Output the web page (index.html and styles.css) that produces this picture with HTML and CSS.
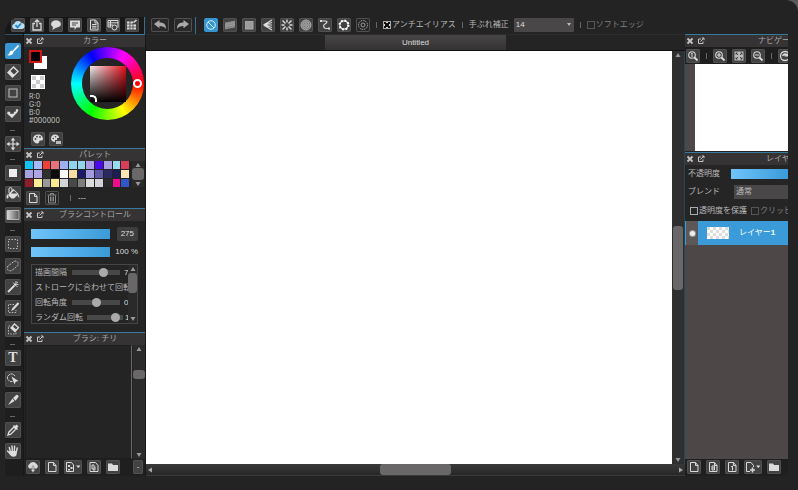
FILE: index.html
```html
<!DOCTYPE html>
<html lang="ja">
<head>
<meta charset="utf-8">
<title>Untitled</title>
<link rel="stylesheet" href="styles.css">
</head>
<body>
<svg class="sprite" aria-hidden="true">
  <symbol id="close" viewBox="0 0 8 8"><path d="M1.500 1.500l5 5M6.500 1.500l-5 5" stroke="currentColor" stroke-width="1.800"/></symbol>
  <symbol id="pop" viewBox="0 0 8 8"><path d="M4 2H1.500v4.500H6V4.500M3.500 4.500L7 1M4.800 1H7v2.200" fill="none" stroke="currentColor"/></symbol>
  <symbol id="up" viewBox="0 0 8 8"><path d="M4 2l2.500 4h-5z" fill="currentColor"/></symbol>
  <symbol id="down" viewBox="0 0 8 8"><path d="M4 6L1.500 2h5z" fill="currentColor"/></symbol>
  <symbol id="left" viewBox="0 0 8 8"><path d="M2 4l4-2.500v5z" fill="currentColor"/></symbol>
  <symbol id="right" viewBox="0 0 8 8"><path d="M6 4L2 1.500v5z" fill="currentColor"/></symbol>
  <symbol id="page" viewBox="0 0 14 14"><path d="M3.500 2.500h5l2.500 3v6H3.500zM8.500 2.500v3H11" fill="none" stroke="currentColor"/></symbol>
  <symbol id="folder" viewBox="0 0 14 14"><path d="M2 3.500h4l1 1.500h5v6H2z" fill="currentColor"/></symbol>
  <symbol id="lens" viewBox="0 0 14 14"><circle cx="6" cy="6" r="3.300" fill="none" stroke="currentColor" stroke-width="1.100"/><path d="M8.500 8.500l3 3" stroke="currentColor" stroke-width="1.800"/></symbol>
</svg>

<div class="app">
  <header class="topbar">
    <div class="menu">
      <button class="ib" aria-label="クラウド"><svg viewBox="0 0 14 14"><path d="M3.500 11a2.700 2.700 0 0 1-.3-5.300A4 4 0 0 1 10.500 5a3 3 0 0 1 0 6z" fill="#b9def5"/><path d="M4.500 7.200l2 2.200L10 5.500" fill="none" stroke="#2787c4" stroke-width="1.800"/></svg></button>
      <button class="ib" aria-label="共有"><svg viewBox="0 0 14 14"><path d="M5 5.500H3V12h8V5.500H9M7 9V2M4.800 4L7 1.800 9.200 4" fill="none" stroke="currentColor" stroke-width="1.300"/></svg></button>
      <button class="ib" aria-label="コメント"><svg viewBox="0 0 14 14"><ellipse cx="7" cy="6" rx="5" ry="3.700" fill="currentColor"/><path d="M4 8l-.5 4L8 9z" fill="currentColor"/></svg></button>
      <button class="ib" aria-label="メッセージ"><svg viewBox="0 0 14 14"><path d="M2 2.500h10v7H8.500l-2 2.500V9.500H2z" fill="currentColor"/><path d="M4 5h6M4 7h4" stroke="#444"/></svg></button>
      <button class="ib" aria-label="書類"><svg viewBox="0 0 14 14"><path d="M3.500 2h5l2.500 3v7H3.500zM8 2v3h3M5 6.500h4.500M5 8.300h4.500M5 10h4.500" fill="none" stroke="currentColor"/></svg></button>
      <button class="ib" aria-label="設定一覧"><svg viewBox="0 0 14 14"><path d="M2 2.500h10v7M2 2.500V9h3M2 4.800h10M2 7h5M4.500 2.500V9" fill="none" stroke="currentColor"/><circle cx="8.500" cy="9.500" r="2.500" fill="none" stroke="currentColor"/></svg></button>
      <button class="ib" aria-label="表を編集"><svg viewBox="0 0 14 14"><path d="M2 3.500h6v2.500h3v5.500H2z" fill="currentColor"/><path d="M5 3v9M8 5v7M2 6h9M2 9h9" stroke="#444" stroke-width=".8"/><path d="M8.500 4.500l3-2.500" stroke="currentColor" stroke-width="1.600"/></svg></button>
    </div>
    <div class="history">
      <button class="ib wide" aria-label="元に戻す"><svg viewBox="0 0 18 14"><path d="M3 6L8.500 2v2.500c4.500 0 6.500 2 6.500 6.500C13.500 8.800 11.500 8 8.500 8v2.200z" fill="#aaa"/></svg></button>
      <button class="ib wide" aria-label="やり直す"><svg viewBox="0 0 18 14"><path d="M15 6L9.500 2v2.500C5 4.500 3 6.500 3 11c1.500-2.200 3.500-3 6.500-3v2.200z" fill="#aaa"/></svg></button>
    </div>
    <div class="snaps">
      <button class="ib on" aria-label="スナップオフ"><svg viewBox="0 0 14 14"><circle cx="7" cy="7" r="4.300" fill="none" stroke="#d5efff"/><path d="M4 4l6 6" stroke="#d5efff"/></svg></button>
      <button class="ib" aria-label="平行スナップ"><svg viewBox="0 0 14 14"><path d="M2 4.500l10-2v7l-10 2z" fill="#888"/><path d="M2 6.500l10-2M2 8.500l10-2" stroke="#aaa" stroke-width=".6"/></svg></button>
      <button class="ib" aria-label="十字スナップ"><svg viewBox="0 0 14 14"><path d="M3 3h8.500v8.500H3z" fill="#aaa"/><path d="M3 5h8.500M3 7h8.500M3 9h8.500M5 3v8.500M7 3v8.500M9 3v8.500" stroke="#909090" stroke-width=".6"/></svg></button>
      <button class="ib" aria-label="消失点スナップ"><svg viewBox="0 0 14 14"><path d="M2.500 7L11 2M2.500 7L11 4.500M2.500 7H11M2.500 7L11 9.500M2.500 7L11 12" stroke="currentColor" stroke-width="1.200"/></svg></button>
      <button class="ib" aria-label="集中線スナップ"><svg viewBox="0 0 14 14"><path d="M7 1.500v3M7 9.500v3M1.500 7h3M9.500 7h3M2.500 2.500l3 3M8.500 8.500l3 3M11.500 2.500l-3 3M5.500 8.500l-3 3" stroke="currentColor" stroke-width="1.400"/></svg></button>
      <button class="ib" aria-label="同心円スナップ"><svg viewBox="0 0 14 14"><circle cx="7" cy="7" r="5.300" fill="#777"/><g fill="none" stroke="#b5b5b5" stroke-width=".8"><circle cx="7" cy="7" r="5"/><circle cx="7" cy="7" r="3.200"/><circle cx="7" cy="7" r="1.300"/></g></svg></button>
      <button class="ib" aria-label="曲線スナップ"><svg viewBox="0 0 14 14"><path d="M3 3h4c3 0 2 2 0 3s-2 4 1 4.500h3" fill="none" stroke="currentColor" stroke-width="1.200"/><path d="M2 2h2v2H2zM10 9.500h2v2h-2z" fill="currentColor"/></svg></button>
      <button class="ib" aria-label="楕円スナップ"><svg viewBox="0 0 14 14"><circle cx="7" cy="7" r="4.200" fill="none" stroke="currentColor" stroke-width="1.200"/><circle cx="7" cy="7" r="4.400" fill="none" stroke="#fff" stroke-width="2.200" stroke-dasharray="1.700 1.750"/></svg></button>
      <button class="ib ghost" aria-label="スナップ設定"><svg viewBox="0 0 14 14"><circle cx="7" cy="7" r="4.500" fill="none" stroke="#aaa" stroke-dasharray="1.500 .8"/><circle cx="7" cy="7" r="2" fill="none" stroke="#999"/></svg></button>
    </div>
    <div class="options">
      <i class="sep"></i>
      <label class="check"><input type="checkbox" checked>アンチエイリアス</label>
      <i class="sep"></i>
      <label class="stab">手ぶれ補正 <span class="selwrap"><select><option>14</option></select></span></label>
      <i class="sep"></i>
      <label class="check dim"><input type="checkbox">ソフトエッジ</label>
    </div>
  </header>

  <div class="work">
    <nav class="tools">
      <button class="on" aria-label="ブラシ"><svg viewBox="0 0 16 16"><path d="M13.500 2.500L7.500 9" stroke="#fff" stroke-width="1.800"/><path d="M7.500 8c1.500 1 1 3-1 4-1.500.7-3 .6-4.500 0 2-.5 2-1.500 2.700-2.800S6.500 7.500 7.500 8z" fill="#fff"/></svg></button>
      <button aria-label="消しゴム"><svg viewBox="0 0 16 16"><path d="M3 8.500L8.500 3 13 7.500 7.500 13z" fill="none" stroke="currentColor" stroke-width="1.400"/><path d="M3 8.500L5 6.500l4.500 4.500-2 2z" fill="currentColor"/></svg></button>
      <button aria-label="図形"><svg viewBox="0 0 16 16"><path d="M4 4h8v8H4z" fill="none" stroke="#bbb" stroke-width="1.100"/></svg></button>
      <button aria-label="ドット"><svg viewBox="0 0 16 16"><path d="M2.500 6.500h2v2h2v2h1v-2h2v-2h2V4H13" fill="none" stroke="currentColor" stroke-width="1.300"/><path d="M2.500 7l4.500 4 6-7" fill="none" stroke="currentColor" stroke-width="1.500"/></svg></button>
      <hr>
      <button aria-label="移動"><svg viewBox="0 0 16 16"><path d="M8 3v10M3 8h10" stroke="currentColor" stroke-width="1.200"/><path d="M8 1.500L10.300 4.500H5.700zM8 14.500l-2.300-3h4.600zM1.500 8l3-2.300v4.600zM14.500 8l-3 2.300V5.700z" fill="currentColor"/></svg></button>
      <hr>
      <button aria-label="塗りつぶし図形"><svg viewBox="0 0 16 16"><path d="M4 4h8v8H4z" fill="#eee"/></svg></button>
      <button aria-label="バケツ"><svg viewBox="0 0 16 16"><path d="M4 7.500L8.500 3l5 5L9 12.500H6.500L3 9z" fill="currentColor"/><path d="M7 6V3a1.500 1.500 0 0 0-3 0v4" fill="none" stroke="currentColor"/><path d="M2.500 8C1 10.500 1.200 12.500 2.500 12.500S4 10.500 2.500 8zM13.500 8l1 4-2-2z" fill="currentColor"/><path d="M6 7.500l3-3 3 3z" fill="#444"/></svg></button>
      <button aria-label="グラデーション"><svg viewBox="0 0 16 16"><defs><linearGradient id="gr"><stop stop-color="#ddd"/><stop offset="1" stop-color="#555"/></linearGradient></defs><path d="M2 3.500h12v9H2z" fill="url(#gr)" stroke="#ccc" stroke-width=".8"/></svg></button>
      <hr>
      <button aria-label="選択"><svg viewBox="0 0 16 16"><path d="M3.500 3.500h9v9h-9z" fill="none" stroke="#bbb" stroke-dasharray="1.500 1.500"/></svg></button>
      <button aria-label="投げなわ"><svg viewBox="0 0 16 16"><path d="M2.500 9C3 7 5.500 6.500 7 5s3.500-2.500 5-1.500S13.500 7 12 8.500 9.500 10 8 11.500s-3 1.500-4.500.8S2 10 2.500 9z" fill="none" stroke="#ccc" stroke-dasharray="1.800 1.200"/></svg></button>
      <button aria-label="自動選択"><svg viewBox="0 0 16 16"><path d="M3 13l6.500-6.500" stroke="currentColor" stroke-width="1.800"/><path d="M11 2v2M13.500 5.500h-2M8 3.500l1 1.200M13 3l-1.500 1.500M12.500 8L11 6.500" stroke="currentColor" stroke-width=".9"/><circle cx="10.300" cy="5.500" r="1.300" fill="currentColor"/></svg></button>
      <button aria-label="選択ペン"><svg viewBox="0 0 16 16"><path d="M9 4.500H3.500v8H11V10" fill="none" stroke="#bbb" stroke-dasharray="1.500 1.300"/><path d="M13.500 3L8 9" stroke="currentColor" stroke-width="2"/><path d="M7.500 8l1.500 1.500L6 11z" fill="currentColor"/></svg></button>
      <button aria-label="選択消し"><svg viewBox="0 0 16 16"><path d="M5 5H3.500v8H11v-2" fill="none" stroke="#bbb" stroke-dasharray="1.500 1.300"/><path d="M6 7L9.500 3l4 3.500-3.500 4z" fill="none" stroke="currentColor" stroke-width="1.300"/><path d="M6 7l1.500-1.700 4 3.500L10 10.500z" fill="currentColor"/></svg></button>
      <hr>
      <button class="type" aria-label="テキスト">T</button>
      <button aria-label="操作"><svg viewBox="0 0 16 16"><path d="M7.500 10.500H5L2.500 8V5.500L5 3h3l2.500 2.500" fill="none" stroke="#ccc" stroke-dasharray="2.500 .6"/><path d="M6.500 5.500l7 4.500-2.800.7L9.500 13.500z" fill="currentColor"/></svg></button>
      <button aria-label="分割"><svg viewBox="0 0 16 16"><path d="M3 13L7.500 6.500 9.500 9z" fill="currentColor"/><path d="M8 6l3.500-3.300c1.500 0 2.300 1 2 2.300L10.500 8.700z" fill="currentColor"/></svg></button>
      <hr>
      <button aria-label="スポイト"><svg viewBox="0 0 16 16"><path d="M3 13l.8-2.800L9 5l2 2-5.200 5.200z" fill="none" stroke="currentColor" stroke-width="1.300"/><path d="M8 4l1-1 1 1 1.500-1.500 2 2L12 6l1 1-1 1z" fill="currentColor"/></svg></button>
      <button aria-label="手のひら"><svg viewBox="0 0 16 16"><path d="M5.300 8.500L4.300 4.500M7.300 8L7 3M9.300 8l.3-4.800M11.300 9l.9-4M2.500 8l3 3" stroke="currentColor" stroke-width="1.400" stroke-linecap="round"/><path d="M4.500 8h7.500l-.3 3c-.3 1.700-1 2.800-3.200 2.800s-3-1-4.500-3.800z" fill="currentColor"/></svg></button>
    </nav>

    <aside class="left">
      <section class="panel">
        <div class="head"><button aria-label="閉じる"><svg><use href="#close"/></svg></button><button aria-label="切り離す"><svg><use href="#pop"/></svg></button><h2>カラー</h2></div>
        <div class="color">
          <div class="info">
            <div class="fgbg"><i class="bg"></i><i class="fg"></i></div>
            <i class="clear"></i>
            <p>R:0<br>G:0<br>B:0<br>#000000</p>
            <div class="pair">
              <button class="ib" aria-label="パレット"><svg viewBox="0 0 14 14"><path d="M7 2.500c3 0 5 2 5 4.500 0 2-2 1.500-3 1.500s-.5 3-2.500 3S2 9.500 2 7s2-4.500 5-4.500z" fill="currentColor"/><g fill="#444"><circle cx="4.500" cy="7" r=".9"/><circle cx="6" cy="4.700" r=".9"/><circle cx="9" cy="5" r=".9"/></g></svg></button>
              <button class="ib" aria-label="パレットに追加"><svg viewBox="0 0 14 14"><path d="M6 2.500c2.500 0 4 1.500 4 3.500H8v2H6v2C3.500 10 2 8.500 2 6.500s1.500-4 4-4z" fill="currentColor"/><g fill="#444"><circle cx="4.300" cy="6.500" r=".8"/><circle cx="6.500" cy="4.700" r=".8"/></g><path d="M7 9h5v3H7z" fill="#bbb"/></svg></button>
            </div>
          </div>
          <div class="wheel"><div class="hole"><div class="sv"></div></div><i class="hue"></i></div>
        </div>
      </section>

      <section class="panel">
        <div class="head"><button aria-label="閉じる"><svg><use href="#close"/></svg></button><button aria-label="切り離す"><svg><use href="#pop"/></svg></button><h2>パレット</h2></div>
        <div class="palette">
          <div class="swatches">
            <i style="background:#14c3f5"></i><i style="background:#a9b8f2"></i><i style="background:#ee4038"></i><i style="background:#e5737b"></i><i style="background:#9fb0f0"></i><i style="background:#8fd4ea"></i><i style="background:#91d5e8"></i><i style="background:#a99ce6"></i><i style="background:#4a08ee"></i><i style="background:#a9a0e0"></i><i style="background:#98dcf2"></i><i style="background:#d83e55"></i>
            <i style="background:#a69fe2"></i><i style="background:#ada5e6"></i><i style="background:#303030"></i><i style="background:#0c0c0c"></i><i style="background:#ffffff"></i><i style="background:#f7dca4"></i><i style="background:#1a1b68"></i><i style="background:#a39be0"></i><i style="background:#5e57a8"></i><i style="background:#2b2960"></i><i style="background:#1c1d55"></i><i style="background:#fde7b4"></i>
            <i style="background:#8c1e2b"></i><i style="background:#f9ee98"></i><i style="background:#999999"></i><i style="background:#f6ea92"></i><i style="background:#d4d4d8"></i><i style="background:#484848"></i><i style="background:#7e7e7e"></i><i style="background:#dcdcdc"></i><i style="background:#d2d2d8"></i><i style="background:#2a2a2a"></i><i style="background:#f00c8a"></i><i style="background:#2f57c8"></i>
          </div>
          <div class="vbar pal"><svg><use href="#up"/></svg><i class="thumb"></i><svg><use href="#down"/></svg></div>
        </div>
        <div class="palbar">
          <button class="ib" aria-label="色を追加"><svg><use href="#page"/></svg></button>
          <button class="ib ghost" aria-label="色を削除"><svg viewBox="0 0 14 14"><path d="M2.500 4h9M5.500 4V2.500h3V4M3.500 4.500V12h7V4.500M5.500 5.500v5M7 5.500v5M8.500 5.500v5" fill="none" stroke="#999" stroke-width=".9"/></svg></button>
          <i class="sep"></i><span>---</span>
        </div>
      </section>

      <section class="panel">
        <div class="head"><button aria-label="閉じる"><svg><use href="#close"/></svg></button><button aria-label="切り離す"><svg><use href="#pop"/></svg></button><h2>ブラシコントロール</h2></div>
        <div class="control">
          <div class="size"><input class="bar" type="range" aria-label="ブラシサイズ" max="275" value="275"><output class="box">275</output></div>
          <div class="size"><input class="bar" type="range" aria-label="不透明度" value="100"><output>100 %</output></div>
          <div class="params">
            <div class="rows">
              <label>描画間隔<input type="range" value="70"><span>7</span></label>
              <label>ストロークに合わせて回転</label>
              <label>回転角度<input type="range" value="50"><span>0</span></label>
              <label>ランダム回転<input class="short" type="range" value="90"><span>1</span></label>
            </div>
            <div class="vbar par"><svg><use href="#up"/></svg><i class="thumb"></i><i></i><svg><use href="#down"/></svg></div>
          </div>
        </div>
      </section>

      <section class="panel grow">
        <div class="head"><button aria-label="閉じる"><svg><use href="#close"/></svg></button><button aria-label="切り離す"><svg><use href="#pop"/></svg></button><h2>ブラシ: チリ</h2></div>
        <div class="brushes">
          <div class="blist"></div>
          <div class="vbar bru"><svg><use href="#up"/></svg><i></i><i class="thumb"></i><i></i><svg><use href="#down"/></svg></div>
        </div>
        <div class="foot">
          <button class="ib" aria-label="クラウドから追加"><svg viewBox="0 0 14 14"><path d="M3.500 8.500a2.500 2.500 0 0 1 0-4.500 4 4 0 0 1 7 0 2.500 2.500 0 0 1 0 4.500z" fill="currentColor"/><path d="M7 12.500L4.500 9.500h1.700V6h1.600v3.500h1.700z" fill="currentColor" stroke="#444" stroke-width=".4"/></svg></button>
          <button class="ib" aria-label="新規ブラシ"><svg><use href="#page"/></svg></button>
          <button class="ib wide" aria-label="ビットマップから追加"><svg viewBox="0 0 18 14"><path d="M2.500 2.500h5l2 2.500v6.500h-7z" fill="none" stroke="currentColor"/><path d="M4 5h2v2H4zM6.500 7h2v2h-2zM4 9h2v1.500H4z" fill="currentColor"/><path d="M12 5.500h4.500L14.300 8z" fill="currentColor"/></svg></button>
          <button class="ib" aria-label="複製"><svg viewBox="0 0 14 14"><path d="M3 2.500h5.500l2.500 3v6H3zM5 5h2v4H5zM8 6.500v3.500H6" fill="none" stroke="currentColor"/></svg></button>
          <button class="ib" aria-label="フォルダ"><svg><use href="#folder"/></svg></button>
          <button class="ib more" aria-label="その他">-</button>
        </div>
      </section>
    </aside>

    <main class="center">
      <div class="tabs"><button class="tab">Untitled</button></div>
      <div class="stage">
        <div class="canvas"></div>
        <div class="vbar big"><svg><use href="#up"/></svg><i></i><i class="thumb"></i><i></i><svg><use href="#down"/></svg></div>
      </div>
      <div class="hbar"><svg><use href="#left"/></svg><i></i><i class="thumb"></i><i></i><svg><use href="#right"/></svg></div>
    </main>

    <aside class="rightside">
      <section class="panel">
        <div class="head"><button aria-label="閉じる"><svg><use href="#close"/></svg></button><button aria-label="切り離す"><svg><use href="#pop"/></svg></button><h2>ナビゲーター</h2></div>
        <div class="zoombar">
          <button class="ib" aria-label="等倍"><svg viewBox="0 0 14 14"><use href="#lens"/><path d="M6 4v4M5 5l1-1" stroke="currentColor"/></svg></button><i class="sep"></i>
          <button class="ib" aria-label="拡大"><svg viewBox="0 0 14 14"><use href="#lens"/><path d="M4 6h4M6 4v4" stroke="currentColor" stroke-width="1.200"/></svg></button>
          <button class="ib" aria-label="全体表示"><svg viewBox="0 0 14 14"><path d="M2.500 2.500h9v9h-9z" fill="#bbb"/><path d="M4 4l2 2M10 4L8 6M4 10l2-2M10 10L8 8M4 4h1.500M4 4v1.500M10 4H8.500M10 4v1.500M4 10h1.500M4 10V8.500M10 10H8.500M10 10V8.500" stroke="#333" stroke-width=".9"/></svg></button>
          <button class="ib" aria-label="縮小"><svg viewBox="0 0 14 14"><use href="#lens"/><path d="M4 6h4" stroke="currentColor" stroke-width="1.200"/></svg></button><i class="sep"></i>
          <button class="ib" aria-label="回転"><svg viewBox="0 0 14 14"><circle cx="7" cy="7" r="4.500" fill="none" stroke="currentColor" stroke-width="1.300"/><path d="M4 7a3 3 0 0 1 5-2l1-1v3.500H6.500l1-1z" fill="currentColor"/></svg></button>
        </div>
        <div class="navi"><div class="thumbnail"></div></div>
      </section>
      <section class="panel grow">
        <div class="head"><button aria-label="閉じる"><svg><use href="#close"/></svg></button><button aria-label="切り離す"><svg><use href="#pop"/></svg></button><h2 class="wide">レイヤー</h2></div>
        <div class="props">
          <label class="prop">不透明度<input class="bar" type="range" value="100"></label>
          <label class="prop">ブレンド<select><option>通常</option></select></label>
          <div class="checks"><label class="check"><input type="checkbox">透明度を保護</label><label class="check dim"><input type="checkbox">クリッピング</label></div>
        </div>
        <div class="layers">
          <div class="layer"><button class="eye" aria-label="表示"></button><i class="mini"></i><span>レイヤー<b>1</b></span></div>
        </div>
        <div class="foot">
          <button class="ib" aria-label="新規レイヤー"><svg><use href="#page"/></svg></button>
          <button class="ib" aria-label="8bitレイヤー"><svg viewBox="0 0 14 14"><use href="#page"/><path d="M6 6h2.500v4H6zM6 8h2.500" fill="none" stroke="currentColor"/></svg></button>
          <button class="ib" aria-label="1bitレイヤー"><svg viewBox="0 0 14 14"><use href="#page"/><path d="M7.500 6v4.500M6 7l1.500-1" stroke="currentColor"/></svg></button>
          <button class="ib wide" aria-label="レイヤーを追加"><svg viewBox="0 0 18 14"><path d="M6 11.500H2.500v-9h4.500l2.500 3V7" fill="none" stroke="currentColor"/><path d="M8.500 7.500v5M6 10h5" stroke="currentColor" stroke-width="1.500"/><path d="M12 5.500h4.500L14.300 8z" fill="currentColor"/></svg></button>
          <button class="ib" aria-label="フォルダ"><svg><use href="#folder"/></svg></button>
        </div>
      </section>
    </aside>
  </div>
</div>
</body>
</html>
```
FILE: styles.css
```css
* { box-sizing: border-box; }
html { background: #5a5a5a; }
body {
  margin: 0;
  height: 100vh;
  min-height: 480px;
  padding: 17px 10px 14px 5px;
  background: #232323;
  border-top-right-radius: 12px;
  color: #b8b8b8;
  font: 8px/12px "Liberation Sans", "Noto Sans CJK JP", sans-serif;
  overflow: hidden;
}
.sprite { position: absolute; width: 0; height: 0; }
svg { display: block; }
i { display: block; }
button, select, input { font: inherit; color: inherit; margin: 0; padding: 0; border: 0; }
h2, p { margin: 0; font: inherit; }

.app {
  display: flex;
  flex-direction: column;
  height: 100%;
  border-top-left-radius: 16px;
  overflow: hidden;
}

/* icon buttons */
.ib {
  display: grid;
  place-items: center;
  flex: none;
  width: 14px;
  height: 14px;
  border-radius: 2px;
  background: #434243;
  box-shadow: 0 0 0 1px #505050 inset;
  color: #dadada;
}
.ib svg { width: 14px; height: 14px; }
.ib.wide { width: 18px; }
.ib.wide svg { width: 18px; }
.ib.on { background: #3796d2; box-shadow: none; }
.ib.ghost { background: #252525; }
.sep { flex: none; width: 1px; height: 6px; background: #666; }

/* top bar */
.topbar { display: flex; flex: none; height: 17px; }
.menu, .history, .snaps, .options { display: flex; align-items: center; padding-bottom: 1px; }
.menu { gap: 5px; width: 140px; padding-left: 6px; border-right: 1px solid #34708f; background: #181818; }
.history { gap: 5px; padding-left: 6px; padding-right: 3px; border-right: 1px solid #34708f; }
.history .ib { background: #292929; }
.snaps { gap: 5px; padding-left: 8px; padding-right: 6px; }
.options { gap: 6px; white-space: nowrap; }
.check { display: flex; align-items: center; gap: 1px; color: #b8b8b8; }
.check input { appearance: none; width: 8px; height: 8px; border: 1px solid #aaa; }
.check input:checked {
  background:
    linear-gradient(45deg, transparent 40%, #111 40% 60%, transparent 60%),
    linear-gradient(-45deg, #ddd 40%, #111 40% 60%, #ddd 60%);
}
.check.dim { color: #808080; }
.dim input { border-color: #555; }
.stab { display: flex; align-items: center; gap: 5px; }
.selwrap { position: relative; }
.selwrap::after {
  content: "";
  position: absolute;
  right: 3px;
  top: 5px;
  border: 2px solid transparent;
  border-top: 3px solid #bbb;
}
select { appearance: none; background: #4a4748; }
.selwrap select { display: block; width: 60px; height: 14px; padding-left: 2px; color: #ddd; border-radius: 1px; }

.work { display: flex; flex: 1; min-height: 0; }

/* tool column */
.tools {
  display: flex;
  flex-direction: column;
  justify-content: space-between;
  flex: none;
  width: 18px;
  padding: 8px 0 17px;
  background: #1e1e1e;
  border-top: 1px solid #2b5468;
}
.tools button { width: 16px; height: 16px; background: #434243; border-radius: 2px; box-shadow: 0 0 0 1px #505050 inset; color: #dedede; }
.tools .on { background: #3796d2; box-shadow: none; }
.tools .type { font: bold 14px/16px "Liberation Serif", serif; }
.tools hr { width: 5px; height: 3px; margin: 0 5px; border: 0; border-bottom: 1px solid #666; }

/* panels */
.left { display: flex; flex-direction: column; flex: none; width: 123px; padding: 0 1px; background: #181818; }
.rightside { display: flex; flex-direction: column; flex: none; width: 103px; overflow: hidden; }
.panel { flex: none; background: #242424; }
.panel.grow { display: flex; flex-direction: column; flex: 1; min-height: 0; }
.head { display: flex; align-items: center; gap: 3px; height: 13px; padding-left: 1px; background: #363334; border-top: 1px solid #377a9c; }
.head button { background: none; width: 8px; height: 8px; color: #c4c4c4; }
.head svg { width: 8px; height: 8px; }
.head h2 { flex: 1; padding-right: 2px; text-align: center; white-space: nowrap; color: #a8a8a8; }

.color { display: flex; justify-content: space-between; height: 101px; padding: 0 1px 0 5px; }
.info { width: 42px; display: flex; flex-direction: column; color: #c4c4c4; font: 7px/8px Inter, "Liberation Sans", sans-serif; }
.fgbg { position: relative; height: 20px; margin-top: 3px; }
.fg, .bg { position: absolute; width: 13px; height: 13px; }
.fg { left: 0; top: 0; background: #000; border: 2px solid #cf1515; }
.bg { left: 5px; top: 6px; background: #fff; }
.clear { width: 14px; height: 14px; margin: 5px 0 4px 2px; border: 1px solid #fff; background: repeating-conic-gradient(#fff 0 25%, #ccc 0 50%) 0 0 / 8px 8px; }
.pair { display: flex; gap: 4px; margin-top: 7px; padding-left: 2px; }
.wheel {
  position: relative;
  display: grid;
  place-items: center;
  width: 73px;
  height: 73px;
  border-radius: 50%;
  background: conic-gradient(from 90deg, #f00, #ff0, #0f0, #0ff, #00f, #f0f, #f00);
}
.hole { display: grid; place-items: center; width: 51px; height: 51px; border-radius: 50%; background: #242424; }
.sv { position: relative; width: 36px; height: 36px; background: linear-gradient(to top, #000, transparent), linear-gradient(to right, #eee, #e8101c); }
.sv::after { content: ""; position: absolute; left: 0; bottom: 0; width: 5px; height: 5px; border: solid #fff; border-width: 2px 2px 0 0; border-radius: 0 5px 0 0; }
.hue { position: absolute; right: 2px; top: 32px; width: 9px; height: 9px; border: 2px solid #fff; border-radius: 50%; }

/* scroll bars */
.vbar { display: grid; justify-items: center; color: #999; background: #2b2a2a; }
.vbar svg, .hbar svg { width: 8px; height: 8px; }
.thumb { width: 100%; height: 100%; background: #696767; border-radius: 3px; }

.palette { display: flex; gap: 3px; padding: 0 1px 1px; }
.swatches { flex: 1; display: grid; grid-template-columns: repeat(12, 1fr); grid-auto-rows: 8px; gap: 1px; }
.pal { width: 12px; grid-template-rows: 7px 12px 7px; }
.palbar { display: flex; align-items: center; gap: 5px; height: 20px; padding-left: 2px; }
.palbar .sep { margin: 0 2px 0 6px; }
.palbar span { color: #ddd; }

.control { height: 111px; padding: 4px 7px 0; }
.size { display: flex; align-items: center; justify-content: space-between; height: 18px; color: #ddd; }
.bar { appearance: none; height: 10px; background: linear-gradient(90deg, #70c4fa, #3a9bd8); }
.bar::-webkit-slider-thumb { appearance: none; width: 0; height: 10px; }
.size .bar { width: 79px; }
.size output { white-space: nowrap; }
.size .box { padding: 1px 4px; background: #3e3e3e; border-radius: 2px; }
.params { display: flex; height: 60px; margin-top: 3px; border: 1px solid #454545; }
.rows { flex: 1; min-width: 0; overflow: hidden; padding-left: 3px; }
.rows label { display: flex; align-items: center; height: 15px; white-space: nowrap; }
.rows input { appearance: none; flex: none; width: 48px; height: 9px; margin: 0 4px 0 5px; background: linear-gradient(#484848, #484848) center / 100% 5px no-repeat; }
.rows .short { width: 36px; margin: 0 2px 0 4px; }
.rows input::-webkit-slider-thumb { appearance: none; width: 9px; height: 9px; border-radius: 50%; background: #aaa; }
.rows span { color: #ddd; }
.par { width: 9px; grid-template-rows: 8px 20fr 22fr 8px; }

.brushes { display: flex; flex: 1; min-height: 0; }
.blist { flex: 1; margin: 0 1px; border: 1px solid #1d1d1d; border-right-color: #666; }
.bru { width: 12px; grid-template-rows: 8px 17fr 9fr 72fr 8px; }
.foot { display: flex; align-items: center; gap: 5px; flex: none; height: 17px; padding: 0 2px 1px; background: #1f1f1f; overflow: hidden; }
.left .more { width: 10px; margin-left: auto; }

/* document */
.center { display: flex; flex-direction: column; flex: 1; min-width: 0; background: #242424; }
.tabs { display: flex; justify-content: center; flex: none; height: 17px; border-bottom: 1px solid #111; border-top: 1px solid #2c2c2c; }
.tab { width: 33.400%; background: linear-gradient(#474546, #343233); color: #ddd; }
.stage { display: flex; flex: 1; min-height: 0; }
.canvas { flex: 1; background: #fff; }
.big { width: 13px; padding: 0 1px; grid-template-rows: 8px 167fr 65fr 166fr 8px; background: #302f2f; border-right: 1px solid #24465a; }
.hbar { display: grid; flex: none; align-items: center; height: 12px; grid-template-columns: 8px 226fr 70fr 226fr 8px; background: linear-gradient(#3a3939, #282828); color: #aaa; border-bottom: 1px solid #3a3a3a; }

/* right side */
.rightside .panel { background: #262526; }
.rightside .head h2 { padding-left: 50px; text-align: left; }
.rightside .head .wide { padding-left: 58px; }
.zoombar { display: flex; align-items: center; gap: 5px; height: 17px; padding-left: 1px; background: #1e1e1e; }
.zoombar .sep { margin: 0 1px; }
.navi { height: 88px; padding-left: 10px; background: #4d4747; border-bottom: 1px solid #222; }
.thumbnail { height: 100%; background: #fff; }
.props { height: 56px; }
.prop { display: flex; align-items: center; justify-content: space-between; height: 18px; padding-left: 3px; color: #bbb; }
.prop .bar { width: 57px; }
.prop select { width: 54px; height: 14px; padding-left: 2px; color: #bbb; }
.checks { display: flex; align-items: center; gap: 4px; height: 19px; padding-left: 5px; white-space: nowrap; }
.layers { flex: 1; min-height: 0; background: #4d4747; }
.layer { display: flex; align-items: center; height: 24px; background: #3a9bd8; color: #fff; }
.eye { display: grid; place-items: center; width: 12px; height: 100%; margin-left: 1px; background: #5c5858; }
.eye::before { content: ""; width: 5px; height: 5px; border-radius: 50%; background: #eee; box-shadow: 0 0 0 1px #999; }
.mini { width: 22px; height: 12px; margin: 0 10px 0 9px; background: repeating-conic-gradient(#fff 0 25%, #ddd 0 50%) 0 0 / 6px 6px; }
```
